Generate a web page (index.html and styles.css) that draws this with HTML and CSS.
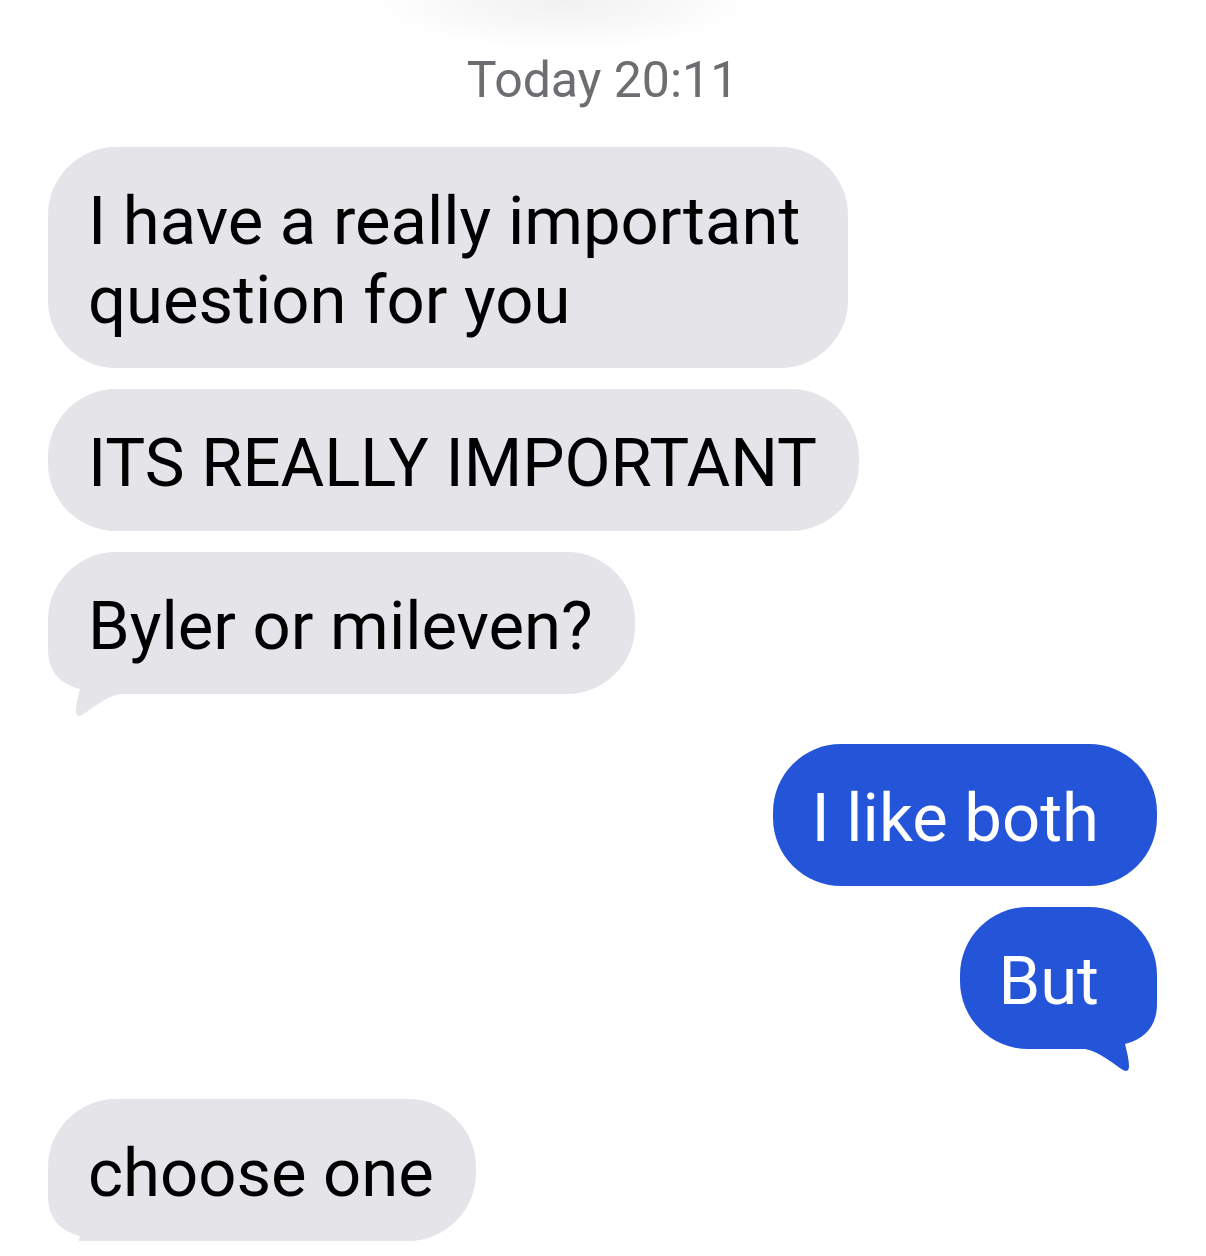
FILE: index.html
```html
<!DOCTYPE html>
<html lang="en">
<head>
    <meta charset="UTF-8">
    <meta name="viewport" content="width=device-width, initial-scale=1.0">
    <title>Messages</title>
    <link rel="stylesheet" href="styles.css">
</head>
<body>
    <div class="thread">
        <div class="stamp">Today 20:11</div>

        <!-- incoming -->
        <div class="group in">
            <div class="bubble">I have a really important question for you</div>
            <div class="bubble wide">ITS REALLY IMPORTANT</div>
            <div class="bubble">Byler or mileven?
                <svg class="tail" viewBox="0 0 90 100" width="90" height="100"><path d="M0 0 L0 28 C0 50 12 63 32 68 C30 76 28 84 28 90 Q28 97 34 94 C44 88 56 76 72 73 L90 73 L90 0 Z"/></svg>
            </div>
        </div>

        <!-- outgoing -->
        <div class="group out">
            <div class="bubble">I like both</div>
            <div class="bubble">But
                <svg class="tail" viewBox="0 0 90 100" width="90" height="100"><path d="M0 0 L0 28 C0 50 12 63 32 68 C30 76 28 84 28 90 Q28 97 34 94 C44 88 56 76 72 73 L90 73 L90 0 Z"/></svg>
            </div>
        </div>

        <div class="group in">
            <div class="bubble">choose one
                <svg class="tail" viewBox="0 0 90 100" width="90" height="100"><path d="M0 0 L0 28 C0 50 12 63 32 68 C30 76 28 84 28 90 Q28 97 34 94 C44 88 56 76 72 73 L90 73 L90 0 Z"/></svg>
            </div>
        </div>
    </div>
</body>
</html>
```

FILE: styles.css
```css
/* hilo de mensajes estilo iMessage */
body {
    margin: 0;
    font-family: Roboto, "Liberation Sans", Arial, sans-serif;
    background: #fff radial-gradient(ellipse 190px 50px at 563px 0, #f1f1f2 0%, #f8f8f9 55%, #fff 100%) no-repeat;
    overflow: hidden;
}
.thread {
    padding: 50px 49px 0 48px;
    display: flex;
    flex-direction: column;
}
.stamp {
    font-size: 50px;
    line-height: 60px;
    color: #6d6d72;
    text-align: center;
}
.group {
    display: flex;
    flex-direction: column;
    gap: 21px;
    margin-top: 50px;
}
.stamp + .group {
    margin-top: 37px;
}
.group.in {
    align-items: flex-start;
}
.group.out {
    align-items: flex-end;
}
.bubble {
    position: relative;
    isolation: isolate;
    box-sizing: border-box;
    max-width: 800px;
    font-size: 67px;
    line-height: 79px;
    padding: 35px 42px 28px 40px;
    border-radius: 68px;
    background-color: #e4e4e9;
    color: #000;
}
.bubble.wide {
    max-width: none;
}
.out .bubble {
    background-color: #2455d9;
    color: #fff;
    padding: 35px 58px 28px 38px;
}
.tail {
    position: absolute;
    z-index: -1;
    left: 0;
    bottom: -27px;
    fill: #e4e4e9;
}
.out .tail {
    left: auto;
    right: 0;
    transform: scaleX(-1);
    fill: #2455d9;
}
```
